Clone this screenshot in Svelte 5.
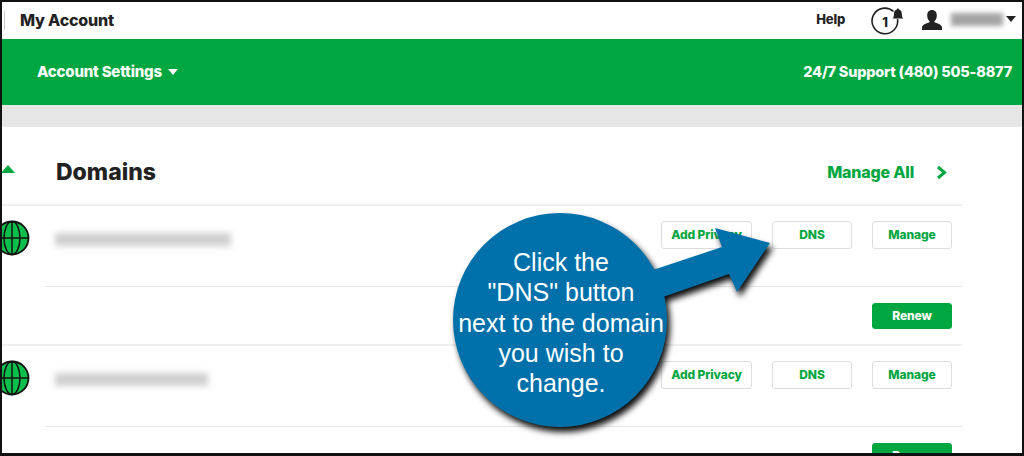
<script>
    const domains = [
        { width: 176, renew: true },
        { width: 153, renew: true }
    ];
</script>

<div class="frame">
    <header class="topbar">
        <div class="brand">My Account</div>
        <a class="help" href="/help">Help</a>
        <svg class="notify" width="34" height="30" viewBox="0 0 34 30">
            <path d="M22.500 6.500 A12.800 12.800 0 1 0 26.500 14" fill="none" stroke="#222" stroke-width="1.600" />
            <path d="M21.500 13.500 c1.200-1 1.400-2.500 1.500-5 c.1-2.400 1.300-3.600 2.800-3.900 c0-1.600 2.200-1.600 2.200 0 c1.500.3 2.700 1.500 2.800 3.900 c.1 2.500 .3 4 1.500 5 z" fill="#222" />
            <text x="14" y="22" text-anchor="middle" class="count">1</text>
        </svg>
        <svg class="user" width="20" height="20" viewBox="0 0 20 20">
            <path d="M10 0 c3.200 0 4.800 2.400 4.800 5.400 c0 2.600-1 4.600-2.300 5.600 v1.200 c3.600 1.200 7.500 2.400 7.500 5.400 v2.400 H0 v-2.400 c0-3 3.900-4.200 7.500-5.400 V11 C6.200 10 5.200 8 5.200 5.400 5.200 2.400 6.800 0 10 0z" fill="#222" />
        </svg>
        <span class="username"></span>
        <span class="caret dark"></span>
    </header>

    <div class="greenbar">
        <div class="settings">Account Settings <span class="caret"></span></div>
        <div class="support">24/7 Support (480) 505-8877</div>
    </div>

    <div class="spacer"></div>

    <main class="content">
        <div class="heading">
            <span class="up"></span>
            <h1>Domains</h1>
            <a class="manage-all" href="/domains">Manage All</a>
            <svg class="chevron" width="11" height="15" viewBox="0 0 11 15">
                <path d="M2 2 L8.500 7.500 L2 13" fill="none" stroke="#00a63f" stroke-width="3" />
            </svg>
        </div>

        {#each domains as domain}
            <section class="domain">
                <div class="domain-main">
                    <svg class="globe" width="36" height="36" viewBox="0 0 36 36">
                        <circle cx="18" cy="18" r="16.500" fill="#0cbf4c" stroke="#111" stroke-width="1.800" />
                        <ellipse cx="18" cy="18" rx="8" ry="16.500" fill="none" stroke="#111" stroke-width="1.500" />
                        <path d="M18 1.500 V34.500 M1.500 18 H34.500" stroke="#111" stroke-width="1.500" />
                    </svg>
                    <span class="blurred" style="width: {domain.width}px"></span>
                    <div class="actions">
                        <button class="wide">Add Privacy</button>
                        <button>DNS</button>
                        <button>Manage</button>
                    </div>
                </div>
                <div class="domain-foot">
                    <button class="renew">Renew</button>
                </div>
            </section>
        {/each}
    </main>

    <div class="callout">
        <svg width="340" height="240" viewBox="0 0 340 240">
            <path class="shape" d="M213 70 L282 47 L275 28 L330 43 L297 92 L289 74 L223 97 Z" />
            <circle class="shape" cx="120" cy="120" r="107" />
        </svg>
        <p>Click the<br />"DNS" button<br />next to the domain<br />you wish to<br />change.</p>
    </div>
</div>

<style>
    :global(body) {
        margin: 0;
    }

    .frame {
        position: relative;
        width: 1024px;
        height: 456px;
        box-sizing: border-box;
        border: 2px solid #111;
        border-bottom-width: 3px;
        overflow: hidden;
        background: #fff;
        font-family: Inter, "Liberation Sans", sans-serif;
        font-weight: 800;
        color: #222;
    }

    .topbar {
        display: flex;
        align-items: center;
        height: 37px;
    }

    .brand {
        margin-left: 2px;
        padding-left: 15px;
        border-left: 1px solid #ccc;
        line-height: 19px;
        font-size: 16px;
        letter-spacing: -0.2px;
    }

    .help {
        margin: -3px 0 0 auto;
        font-size: 13px;
        letter-spacing: -0.2px;
        color: #222;
        text-decoration: none;
    }

    .notify {
        margin-left: 26px;
        margin-top: -2px;
    }

    .count {
        font-size: 13px;
        font-weight: 800;
        fill: #222;
    }

    .user {
        margin-left: 17px;
        margin-top: -1px;
    }

    .username {
        width: 52px;
        height: 13px;
        margin: -2px 0 0 9px;
        background: #a4a4a4;
        filter: blur(2.500px);
    }

    .caret {
        display: inline-block;
        width: 0;
        height: 0;
        border-left: 5px solid transparent;
        border-right: 5px solid transparent;
        border-top: 6px solid #fff;
    }

    .caret.dark {
        border-top-color: #222;
        margin: -3px 6px 0 3px;
    }

    .greenbar {
        display: flex;
        align-items: center;
        justify-content: space-between;
        height: 66px;
        padding: 0 10px 2px 35px;
        box-sizing: border-box;
        background: #00a63f;
        color: #fff;
        font-size: 14.500px;
        letter-spacing: -0.2px;
    }

    .settings {
        font-size: 15px;
    }

    .settings .caret {
        margin-left: 3px;
        vertical-align: 2px;
    }

    .spacer {
        height: 22px;
        background: #e6e6e6;
    }

    .heading {
        display: flex;
        align-items: center;
        height: 77px;
        width: 960px;
        border-bottom: 2px solid #f0f0f0;
    }

    .up {
        width: 0;
        height: 0;
        border-left: 7px solid transparent;
        border-right: 7px solid transparent;
        border-bottom: 8px solid #00a63f;
        margin: 6px 0 0 -1px;
    }

    h1 {
        margin: 14px 0 0 41px;
        font-size: 23px;
        font-weight: 800;
        line-height: 1;
    }

    .manage-all {
        margin: 12px 0 0 auto;
        font-size: 16px;
        letter-spacing: -0.2px;
        color: #00a63f;
        text-decoration: none;
    }

    .chevron {
        margin: 14px 15px 0 22px;
    }

    .domain {
        width: 960px;
        border-bottom: 2px solid #f0f0f0;
    }

    .domain:last-child {
        border-bottom: 0;
    }

    .domain-main {
        display: flex;
        align-items: flex-start;
        height: 81px;
        position: relative;
    }

    .domain-main::after {
        content: "";
        position: absolute;
        left: 43px;
        right: 0;
        bottom: 0;
        height: 1px;
        background: #e6e6e6;
    }

    .globe {
        flex: none;
        margin: 14px 0 0 -8px;
    }

    .blurred {
        height: 13px;
        margin: 27px 0 0 25px;
        background: #cfcfcf;
        filter: blur(3px);
    }

    .actions {
        display: flex;
        gap: 20px;
        margin: 15px 10px 0 auto;
    }

    button {
        width: 80px;
        height: 28px;
        padding: 0 0 2px;
        box-sizing: border-box;
        background: #fff;
        border: 1px solid #ddd;
        border-radius: 3px;
        color: #00a63f;
        font: inherit;
        font-size: 12px;
        letter-spacing: -0.1px;
    }

    button.wide {
        width: 91px;
    }

    .domain-foot {
        display: flex;
        justify-content: flex-end;
        height: 57px;
        padding: 16px 10px 0 0;
        box-sizing: border-box;
    }

    button.renew {
        height: 26px;
        background: #00a63f;
        border-color: #00a63f;
        color: #fff;
    }

    .callout {
        position: absolute;
        left: 438px;
        top: 198px;
        width: 340px;
        height: 240px;
    }

    .callout svg {
        display: block;
        overflow: visible;
        filter: drop-shadow(3px 5px 3px rgba(0, 0, 0, 0.95));
    }

    .shape {
        fill: #0070aa;
    }

    .callout p {
        position: absolute;
        left: 13px;
        top: 47px;
        width: 216px;
        margin: 0;
        color: #fff;
        font-family: "Liberation Sans", sans-serif;
        font-weight: 400;
        font-size: 25px;
        line-height: 30.300px;
        text-align: center;
    }
</style>
